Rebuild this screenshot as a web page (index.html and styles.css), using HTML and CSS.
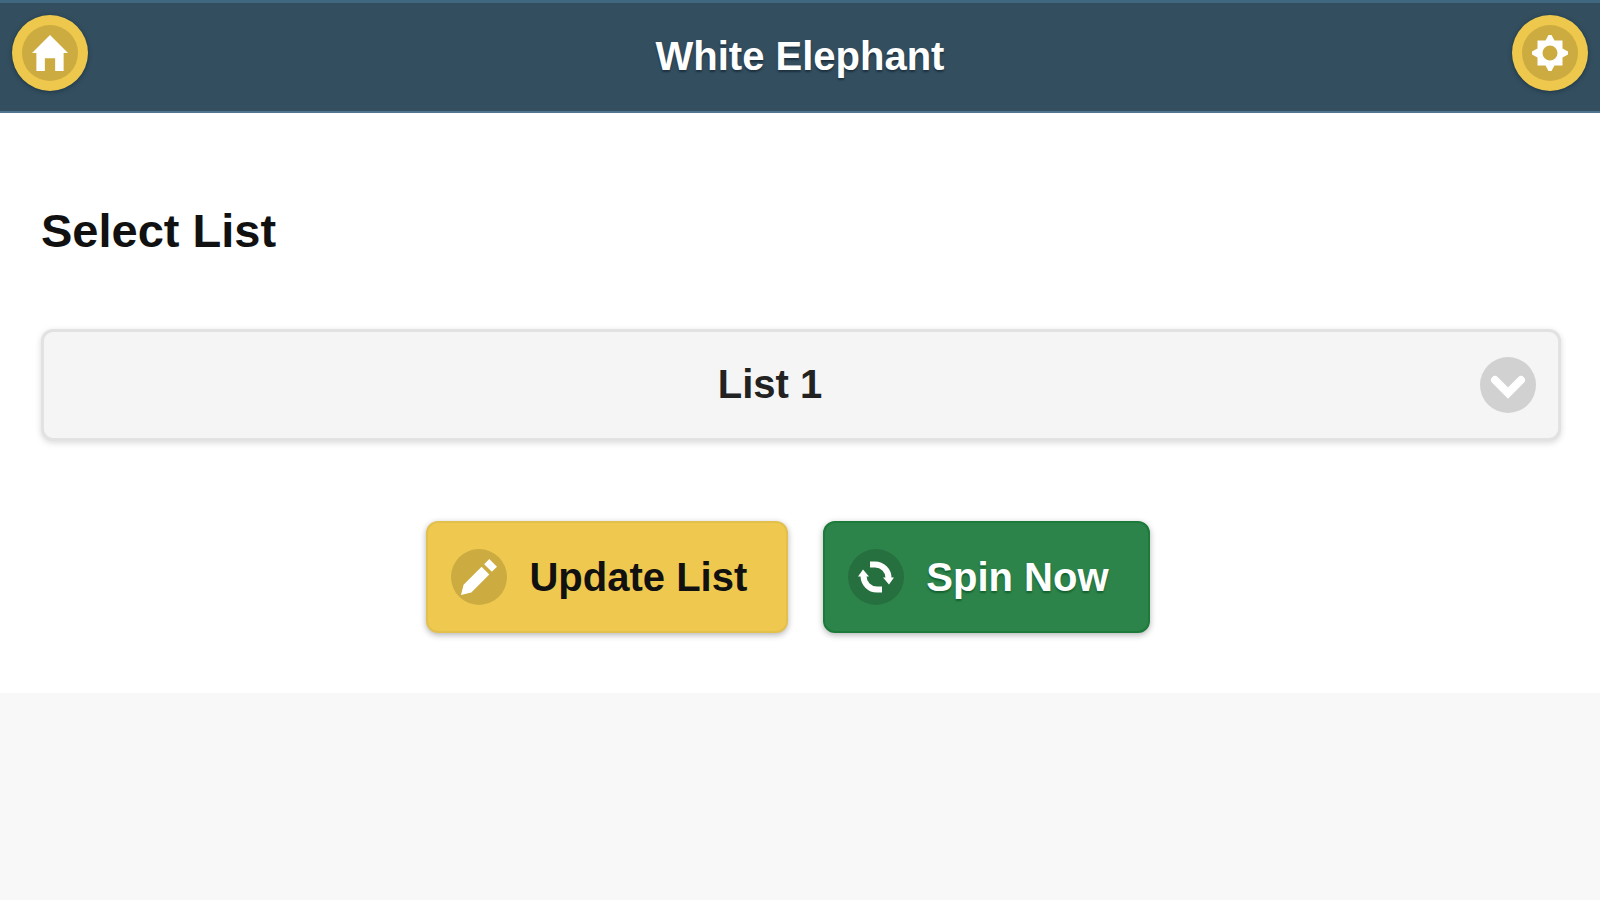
FILE: index.html
```html
<!DOCTYPE html>
<html lang="en">
<head>
<meta charset="utf-8">
<meta name="viewport" content="width=device-width, initial-scale=1">
<title>White Elephant</title>
<link rel="stylesheet" href="styles.css">
</head>
<body>
<header class="header">
  <a class="round" href="#home" aria-label="Home">
    <span class="disc"><svg class="icon" viewBox="0 0 14 14" aria-hidden="true"><path d="M7 0L0 7h1.700v7H5V9h4v5h3.300V7H14z"/></svg></span>
  </a>
  <h1 class="title">White Elephant</h1>
  <a class="round" href="#settings" aria-label="Settings">
    <span class="disc"><svg class="icon" viewBox="-18 -18 36 36" aria-hidden="true">
      <path fill-rule="evenodd" d="M-1.500 -18H1.500L4.500 -12.500L12.500 -12.500L12.500 -4.500L18 -1.500V1.500L12.500 4.500L12.500 12.500L4.500 12.500L1.500 18H-1.500L-4.500 12.500L-12.500 12.500L-12.500 4.500L-18 1.500V-1.500L-12.500 -4.500L-12.500 -12.500L-4.500 -12.500ZM-7.500 0A7.500 7.500 0 1 0 7.500 0A7.500 7.500 0 1 0 -7.500 0Z"/></svg></span>
  </a>
</header>
<main class="content">
  <label class="label" for="list">Select List</label>
  <div class="picker">
    <select class="select" id="list"><option>List 1</option></select>
    <span class="disc disc-gray"><svg class="icon" viewBox="0 0 36 36" aria-hidden="true"><path class="line" d="M5 13L18 26L31 13"/></svg></span>
  </div>
  <div class="actions">
    <button class="button button-gold" type="button">
      <span class="disc"><svg class="icon" viewBox="0 0 14 14" aria-hidden="true"><path d="M1 10l-1 4 4-1 7-7-3-3zM11 0L9 2l3 3 2-2z"/></svg></span>
      Update List
    </button>
    <button class="button button-green" type="button">
      <span class="disc"><svg class="icon" viewBox="0 0 36 36" aria-hidden="true"><path class="ring" d="M12 5.500H17A13.500 13.500 0 0 1 30.500 19M24 30.500H19A13.500 13.500 0 0 1 5.500 17"/><path d="M25 18.500H36L31 25.500zM11 17.500H0L5 10.500z"/></svg></span>
      Spin Now
    </button>
  </div>
</main>
</body>
</html>
```
FILE: styles.css
```css
* { box-sizing: border-box; }

body {
  margin: 0;
  background: #f8f8f8;
  color: #111;
  font-family: "Liberation Sans", Arial, sans-serif;
  font-size: 40px;
  font-weight: bold;
  line-height: 48px;
}

.header {
  display: flex;
  align-items: flex-start;
  justify-content: space-between;
  padding: 12px;
  background: #334e5e;
  border-top: 3px solid #3f6780;
  border-bottom: 2px solid #4f7590;
  min-height: 113px;
}

.title {
  margin: 0;
  padding-top: 17px;
  color: #fff;
  font-size: 40px;
  line-height: 48px;
  text-shadow: 0 2px 2px #1d3140;
}

.round {
  display: grid;
  place-items: center;
  width: 76px;
  height: 76px;
  border-radius: 50%;
  background: #edc84c;
  box-shadow: 0 1px 4px #1c3547;
}

.disc {
  display: grid;
  flex: none;
  place-items: center;
  width: 56px;
  height: 56px;
  border-radius: 50%;
  background: #ccab41;
}

.icon {
  display: block;
  width: 36px;
  height: 36px;
  fill: #fff;
  overflow: visible;
}

.line,
.ring {
  fill: none;
  stroke: #fff;
  stroke-width: 8;
}

.line { stroke-linecap: round; }
.ring { stroke-width: 6; }

.content {
  padding: 88px 39px 60px 41px;
  background: #fff;
}

.label {
  display: block;
  font-size: 47px;
  line-height: 60px;
}

.picker {
  display: grid;
  align-items: center;
  margin-top: 68px;
}

.select,
.picker .disc { grid-area: 1 / 1; }

.select {
  appearance: none;
  width: 100%;
  height: 112px;
  padding: 0 82px 2px 20px;
  border: 3px solid #e2e2e2;
  border-radius: 12px;
  background: #f5f5f5;
  box-shadow: 0 2px 6px rgba(0, 0, 0, .15);
  color: #222;
  font: inherit;
  text-align: center;
  text-align-last: center;
}

.disc-gray {
  justify-self: end;
  margin-right: 25px;
  background: #d1d1d1;
  pointer-events: none;
}

.actions {
  display: flex;
  justify-content: center;
  gap: 35px;
  margin-top: 80px;
  padding-right: 26px;
}

.button {
  display: flex;
  align-items: center;
  gap: 22px;
  height: 112px;
  padding: 0 39px 0 23px;
  border: 2px solid;
  border-radius: 12px;
  box-shadow: 0 2px 6px rgba(0, 0, 0, .3);
  font: inherit;
}

.button-gold {
  border-color: #e3c04c;
  background: #efc94f;
  color: #111;
}

.button-green {
  border-color: #1c7a3a;
  background: #2d844b;
  color: #fff;
  text-shadow: 0 2px 2px #14602e;
}

.button-green .disc { background: #267040; }
```
